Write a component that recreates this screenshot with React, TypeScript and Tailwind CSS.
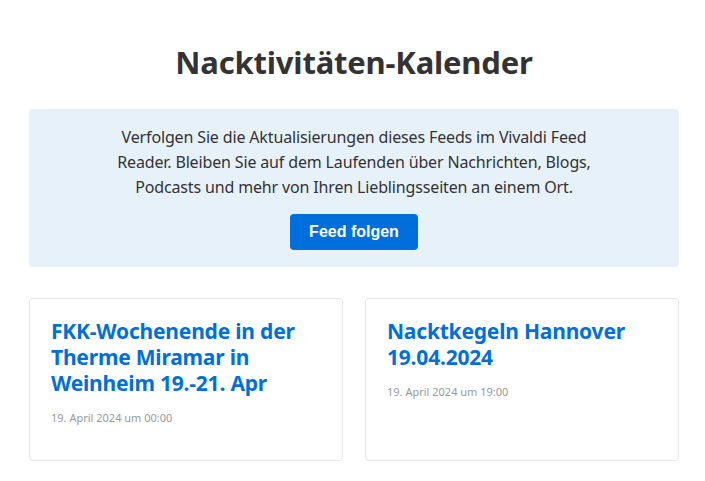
import React from "react";

const EVENTS = [
  { title: "FKK-Wochenende in der Therme Miramar in Weinheim 19.-21. Apr", date: "19. April 2024 um 00:00" },
  { title: "Nacktkegeln Hannover 19.04.2024", date: "19. April 2024 um 19:00" },
];

const App = () => {
  return (
    <div className="min-h-screen bg-white font-['Noto_Sans',sans-serif] text-[#333]">
      <div className="w-[650px] ml-[29px] pt-[42px]">
        <h1 className="text-center text-[31px] leading-[40px] font-bold text-[#333] tracking-[-0.2px]">
          Nacktivitäten-Kalender
        </h1>

        <div className="mt-[27px] bg-[#e7f1fa] rounded pt-[16px] pb-[17px] px-6 flex flex-col items-center">
          <p className="text-center text-[16px] leading-[25px] text-[#333] tracking-[-0.15px]">
            Verfolgen Sie die Aktualisierungen dieses Feeds im Vivaldi Feed
            <br />
            Reader. Bleiben Sie auf dem Laufenden über Nachrichten, Blogs,
            <br />
            Podcasts und mehr von Ihren Lieblingsseiten an einem Ort.
          </p>
          <button className="mt-[14px] w-[128px] h-[36px] rounded bg-[#006fdb] text-white font-bold text-[16px] font-['Liberation_Sans',Arial,sans-serif]">
            Feed folgen
          </button>
        </div>

        <div className="mt-[31px] grid grid-cols-[314px_314px] gap-[22px]">
          {EVENTS.map((event, index) => (
            <div
              key={index}
              className="min-h-[163px] border border-[#e6e6e6] rounded pt-[19px] px-[21px] pb-6"
            >
              <h3 className="text-[21px] leading-[26px] font-bold text-[#0070d9] tracking-[-0.2px]">
                {event.title}
              </h3>
              <p className="mt-[14px] text-[11px] leading-[16px] text-[#999]">{event.date}</p>
            </div>
          ))}
        </div>
      </div>
    </div>
  );
};

export default App;
